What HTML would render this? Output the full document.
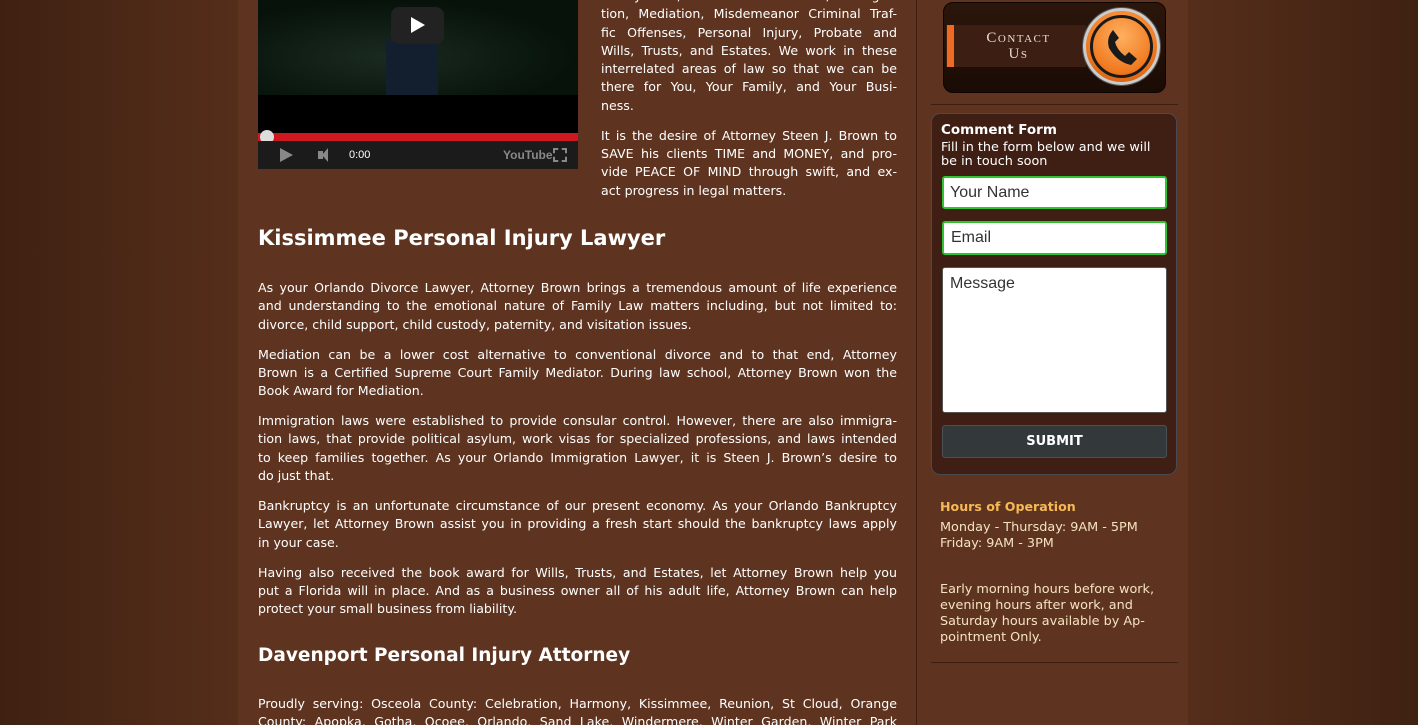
<!DOCTYPE html>
<html><head><style>
*{margin:0;padding:0;box-sizing:border-box}
html,body{width:1418px;height:725px;overflow:hidden}
body{position:relative;background:linear-gradient(90deg,#3f2112 0%,#552e1a 16.8%,#552e1a 83.8%,#3f2112 100%);font-family:"DejaVu Sans","Liberation Sans",sans-serif;color:#fff}
#wrap{position:absolute;left:0;top:0;width:1418px;height:725px;overflow:hidden}
#col{position:absolute;left:238px;top:0;width:950px;height:725px;background:#5e3420}
#sep{position:absolute;left:916px;top:0;width:1px;height:725px;background:#3e1e10}
.p{font-size:12.6px;line-height:18.3px;margin-bottom:11.7px}
.p span{display:block;white-space:nowrap;text-align:justify;text-align-last:justify}
.p span.l{text-align-last:left}
#video{position:absolute;left:258px;top:0;width:320px;height:169px;background:#000}
#right{position:absolute;left:601px;top:-13px;width:296px}
#main{position:absolute;left:258px;top:279px;width:639px}
h2{position:absolute;left:258px;top:226px;font-size:21px;font-weight:bold}
h3{position:absolute;left:258px;top:645px;font-size:18.5px;font-weight:bold}
.side{position:absolute;left:931px;width:246px}
</style></head><body><div id="wrap">
<div id="col"></div><div id="sep"></div>
<div id="video">
 <div style="position:absolute;left:0;top:0;width:320px;height:95px;background:radial-gradient(ellipse at 40% 60%,#1b2a20,#06120a 70%)"></div>
 <div style="position:absolute;left:128px;top:40px;width:52px;height:55px;background:#131f2e"></div>
 <div style="position:absolute;left:133px;top:7px;width:53px;height:37px;background:#222;border-radius:8px"></div>
 <div style="position:absolute;left:153px;top:17px;width:0;height:0;border-left:14px solid #fff;border-top:8px solid transparent;border-bottom:8px solid transparent"></div>
 <div style="position:absolute;left:0;top:133px;width:320px;height:8px;background:#cc181e"></div>
 <div style="position:absolute;left:2px;top:130px;width:14px;height:14px;border-radius:50%;background:#ddd"></div>
 <div style="position:absolute;left:0;top:141px;width:320px;height:28px;background:#1b1b1b"></div>
 <div style="position:absolute;left:22px;top:148px;width:0;height:0;border-left:13px solid #888;border-top:7px solid transparent;border-bottom:7px solid transparent"></div>
 <div style="position:absolute;left:60px;top:151px;width:5px;height:8px;background:#888"></div>
 <div style="position:absolute;left:64px;top:148px;width:0;height:0;border-right:6px solid #888;border-top:7px solid transparent;border-bottom:7px solid transparent"></div>
 <div style="position:absolute;left:91px;top:149px;font-size:11px;color:#fff;font-family:'Liberation Sans',sans-serif">0:00</div>
 <div style="position:absolute;left:245px;top:148px;font-size:12px;color:#888;font-weight:bold;font-family:'Liberation Sans',sans-serif">YouTube</div>
 <div style="position:absolute;left:295px;top:148px;width:14px;height:14px;border:2px dashed #888"></div>
</div>
<div id="right">
<div class="p"><span>Family Law, Foreclosure Defense, Immigra-</span><span>tion, Mediation, Misdemeanor Criminal Traf-</span><span>fic Offenses, Personal Injury, Probate and</span><span>Wills, Trusts, and Estates. We work in these</span><span>interrelated areas of law so that we can be</span><span>there for You, Your Family, and Your Busi-</span><span class="l">ness.</span></div>
<div class="p"><span>It is the desire of Attorney Steen J. Brown to</span><span>SAVE his clients TIME and MONEY, and pro-</span><span>vide PEACE OF MIND through swift, and ex-</span><span class="l">act progress in legal matters.</span></div>
</div>
<h2>Kissimmee Personal Injury Lawyer</h2>
<div id="main">
<div class="p"><span>As your Orlando Divorce Lawyer, Attorney Brown brings a tremendous amount of life experience</span><span>and understanding to the emotional nature of Family Law matters including, but not limited to:</span><span class="l">divorce, child support, child custody, paternity, and visitation issues.</span></div>
<div class="p"><span>Mediation can be a lower cost alternative to conventional divorce and to that end, Attorney</span><span>Brown is a Certified Supreme Court Family Mediator. During law school, Attorney Brown won the</span><span class="l">Book Award for Mediation.</span></div>
<div class="p"><span>Immigration laws were established to provide consular control. However, there are also immigra-</span><span>tion laws, that provide political asylum, work visas for specialized professions, and laws intended</span><span>to keep families together. As your Orlando Immigration Lawyer, it is Steen J. Brown’s desire to</span><span class="l">do just that.</span></div>
<div class="p"><span>Bankruptcy is an unfortunate circumstance of our present economy. As your Orlando Bankruptcy</span><span>Lawyer, let Attorney Brown assist you in providing a fresh start should the bankruptcy laws apply</span><span class="l">in your case.</span></div>
<div class="p"><span>Having also received the book award for Wills, Trusts, and Estates, let Attorney Brown help you</span><span>put a Florida will in place. And as a business owner all of his adult life, Attorney Brown can help</span><span class="l">protect your small business from liability.</span></div>
</div>
<h3>Davenport Personal Injury Attorney</h3>
<div class="p" style="position:absolute;left:258px;top:695px;width:639px;height:30px;overflow:hidden"><span>Proudly serving: Osceola County: Celebration, Harmony, Kissimmee, Reunion, St Cloud, Orange</span><span>County: Apopka, Gotha, Ocoee, Orlando, Sand Lake, Windermere, Winter Garden, Winter Park</span></div>
<div style="position:absolute;left:943px;top:2px;width:223px;height:91px;background:linear-gradient(#2c160b,#1a0b05);border:1px solid #0e0502;border-radius:10px"></div>
<div style="position:absolute;left:946px;top:25px;width:140px;height:42px;background:#3c1f12"></div>
<div style="position:absolute;left:947px;top:25px;width:7px;height:42px;background:#ef6a22"></div>
<div style="position:absolute;left:980px;top:30px;width:77px;text-align:center;font-family:'Liberation Serif',serif;font-size:15px;line-height:16px;letter-spacing:1.5px;color:#e8ddd0;font-variant:small-caps">Contact<br>Us</div>
<div style="position:absolute;left:1083px;top:8px;width:77px;height:77px;border-radius:50%;background:radial-gradient(circle at 50% 35%,#ffb060,#f07a20 60%,#c05010);border:3px solid #ccc;box-shadow:0 0 0 1px #555"></div>
<div style="position:absolute;left:1090px;top:15px;width:63px;height:63px;border-radius:50%;border:3px solid #1a1a1a"></div>
<svg style="position:absolute;left:1105px;top:28px" width="34" height="38" viewBox="0 0 34 38"><path d="M8 2 L14 10 L10 14 Q12 22 20 28 L24 24 L32 31 L26 37 Q12 34 4 20 Q1 10 8 2Z" fill="#1a1a1a"/></svg>
<div style="position:absolute;left:931px;top:104px;width:247px;height:1px;background:#3e1e10"></div>
<div class="side" style="top:113px;height:362px;background:#3f1f14;border:1px solid #4a4a50;border-radius:9px"></div>
<div style="position:absolute;left:941px;top:122px;font-size:13.5px;font-weight:bold">Comment Form</div>
<div style="position:absolute;left:941px;top:141px;width:225px;font-size:12.8px;line-height:13.5px">Fill in the form below and we will be in touch soon</div>
<div style="position:absolute;left:942px;top:176px;width:225px;height:33px;background:#fff;border:2px solid #2fc52f;border-radius:3px;padding:6px 6px;color:#333;font-family:'Liberation Sans',sans-serif;font-size:16px">Your Name</div>
<div style="position:absolute;left:942px;top:221px;width:225px;height:34px;background:#fff;border:2px solid #2fc52f;border-radius:3px;padding:6px 7px;color:#333;font-family:'Liberation Sans',sans-serif;font-size:16px">Email</div>
<div style="position:absolute;left:942px;top:267px;width:225px;height:146px;background:#fff;border:1px solid #555;border-radius:3px;padding:7px 7px;color:#333;font-family:'Liberation Sans',sans-serif;font-size:16px">Message</div>
<div style="position:absolute;left:942px;top:425px;width:225px;height:33px;background:#33383a;border:1px solid #4a5058;border-radius:3px;text-align:center;line-height:31px;font-size:13px;font-weight:bold">SUBMIT</div>
<div style="position:absolute;left:940px;top:499px;font-size:12.6px;font-weight:bold;color:#f7b955">Hours of Operation</div>
<div style="position:absolute;left:940px;top:520px;font-size:12.8px;line-height:16px;color:#f5e3c0">Monday - Thursday: 9AM - 5PM<br>Friday: 9AM - 3PM</div>
<div style="position:absolute;left:940px;top:582px;width:235px;font-size:12.8px;line-height:16px;color:#f5e3c0">Early morning hours before work,<br>evening hours after work, and<br>Saturday hours available by Ap-<br>pointment Only.</div>
<div style="position:absolute;left:931px;top:662px;width:247px;height:1px;background:#3e1e10"></div>
</div></body></html>
